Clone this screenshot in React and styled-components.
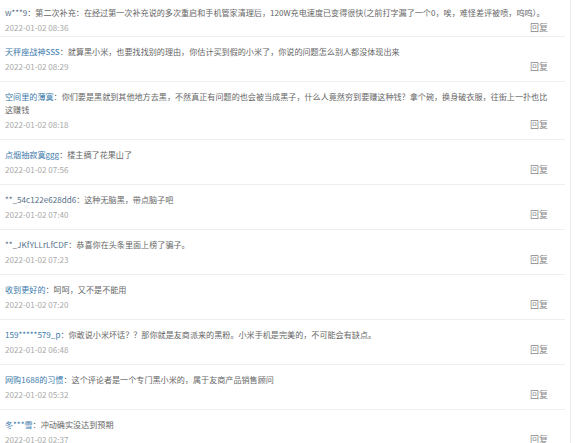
import React from 'react';
import styled, { createGlobalStyle } from 'styled-components';

const GlobalStyle = createGlobalStyle`
  html, body {
    margin: 0;
    padding: 0;
    background: #fff;
  }
  body {
    font-family: "Noto Sans CJK SC", "Liberation Sans", sans-serif;
    overflow: hidden;
  }
`;

const Page = styled.div`
  width: 570px;
  height: 443px;
  border-right: 1px solid #ececec;
  overflow: hidden;
`;

const CommentList = styled.ul`
  list-style: none;
  margin: 0;
  padding: 0;
  width: 565px;
`;

const CommentItem = styled.li`
  padding: 8px 13px 8px 5px;
  border-bottom: 1px solid #eeeeee;

  &:first-child {
    padding-top: 6px;
    padding-bottom: 2px;
  }
`;

const Body = styled.p`
  margin: 0;
  font-size: 8.1px;
  line-height: 13px;
  color: #666;
`;

const Name = styled.span`
  color: ${(p) => (p.$plain ? '#56708a' : '#3a7aab')};
`;

const Meta = styled.div`
  display: flex;
  justify-content: space-between;
  align-items: flex-end;
  height: 14px;
  margin-top: 1px;
  padding-right: 4px;
  font-size: 8.1px;
  line-height: 13px;
`;

const Date = styled.span`
  color: #a9a9a9;
`;

const Reply = styled.a`
  color: #8a8a8a;
  font-size: 9px;
  cursor: pointer;
`;

const comments = [
  {
    id: 1,
    name: 'w***9',
    plain: true,
    text: '第二次补充：在经过第一次补充说的多次重启和手机管家清理后，120W充电速度已变得很快(之前打字漏了一个0，唉，难怪差评被喷，呜呜）。',
    time: '2022-01-02 08:36',
  },
  {
    id: 2,
    name: '天秤座战神SSS',
    text: '就算黑小米，也要找找别的理由，你估计买到假的小米了，你说的问题怎么别人都没体现出来',
    time: '2022-01-02 08:29',
  },
  {
    id: 3,
    name: '空间里的薄寞',
    text: '你们要是黑就到其他地方去黑，不然真正有问题的也会被当成黑子，什么人竟然穷到要赚这种钱？拿个碗，换身破衣服，往街上一扑也比这赚钱',
    time: '2022-01-02 08:18',
  },
  {
    id: 4,
    name: '点烟抽寂寞ggg',
    text: '楼主摘了花果山了',
    time: '2022-01-02 07:56',
  },
  {
    id: 5,
    name: '**_54c122e628dd6',
    plain: true,
    text: '这种无脑黑，带点脑子吧',
    time: '2022-01-02 07:40',
  },
  {
    id: 6,
    name: '**_JKfYLLrLfCDF',
    plain: true,
    text: '恭喜你在头条里面上榜了骗子。',
    time: '2022-01-02 07:23',
  },
  {
    id: 7,
    name: '收到更好的',
    text: '呵呵，又不是不能用',
    time: '2022-01-02 07:20',
  },
  {
    id: 8,
    name: '159*****579_p',
    text: '你敢说小米坏话？？那你就是友商派来的黑粉。小米手机是完美的，不可能会有缺点。',
    time: '2022-01-02 06:48',
  },
  {
    id: 9,
    name: '网购1688的习惯',
    text: '这个评论者是一个专门黑小米的，属于友商产品销售顾问',
    time: '2022-01-02 05:32',
  },
  {
    id: 10,
    name: '冬***雪',
    text: '冲动确实没达到预期',
    time: '2022-01-02 02:37',
  },
];

const Comment = ({ name, plain, text, time }) => (
  <CommentItem>
    <Body>
      <Name $plain={plain}>{name}</Name>
      {`：${text}`}
    </Body>
    <Meta>
      <Date>{time}</Date>
      <Reply>回复</Reply>
    </Meta>
  </CommentItem>
);

export default function App() {
  return (
    <>
      <GlobalStyle />
      <Page>
        <CommentList>
          {comments.map((c) => (
            <Comment key={c.id} {...c} />
          ))}
        </CommentList>
      </Page>
    </>
  );
}
